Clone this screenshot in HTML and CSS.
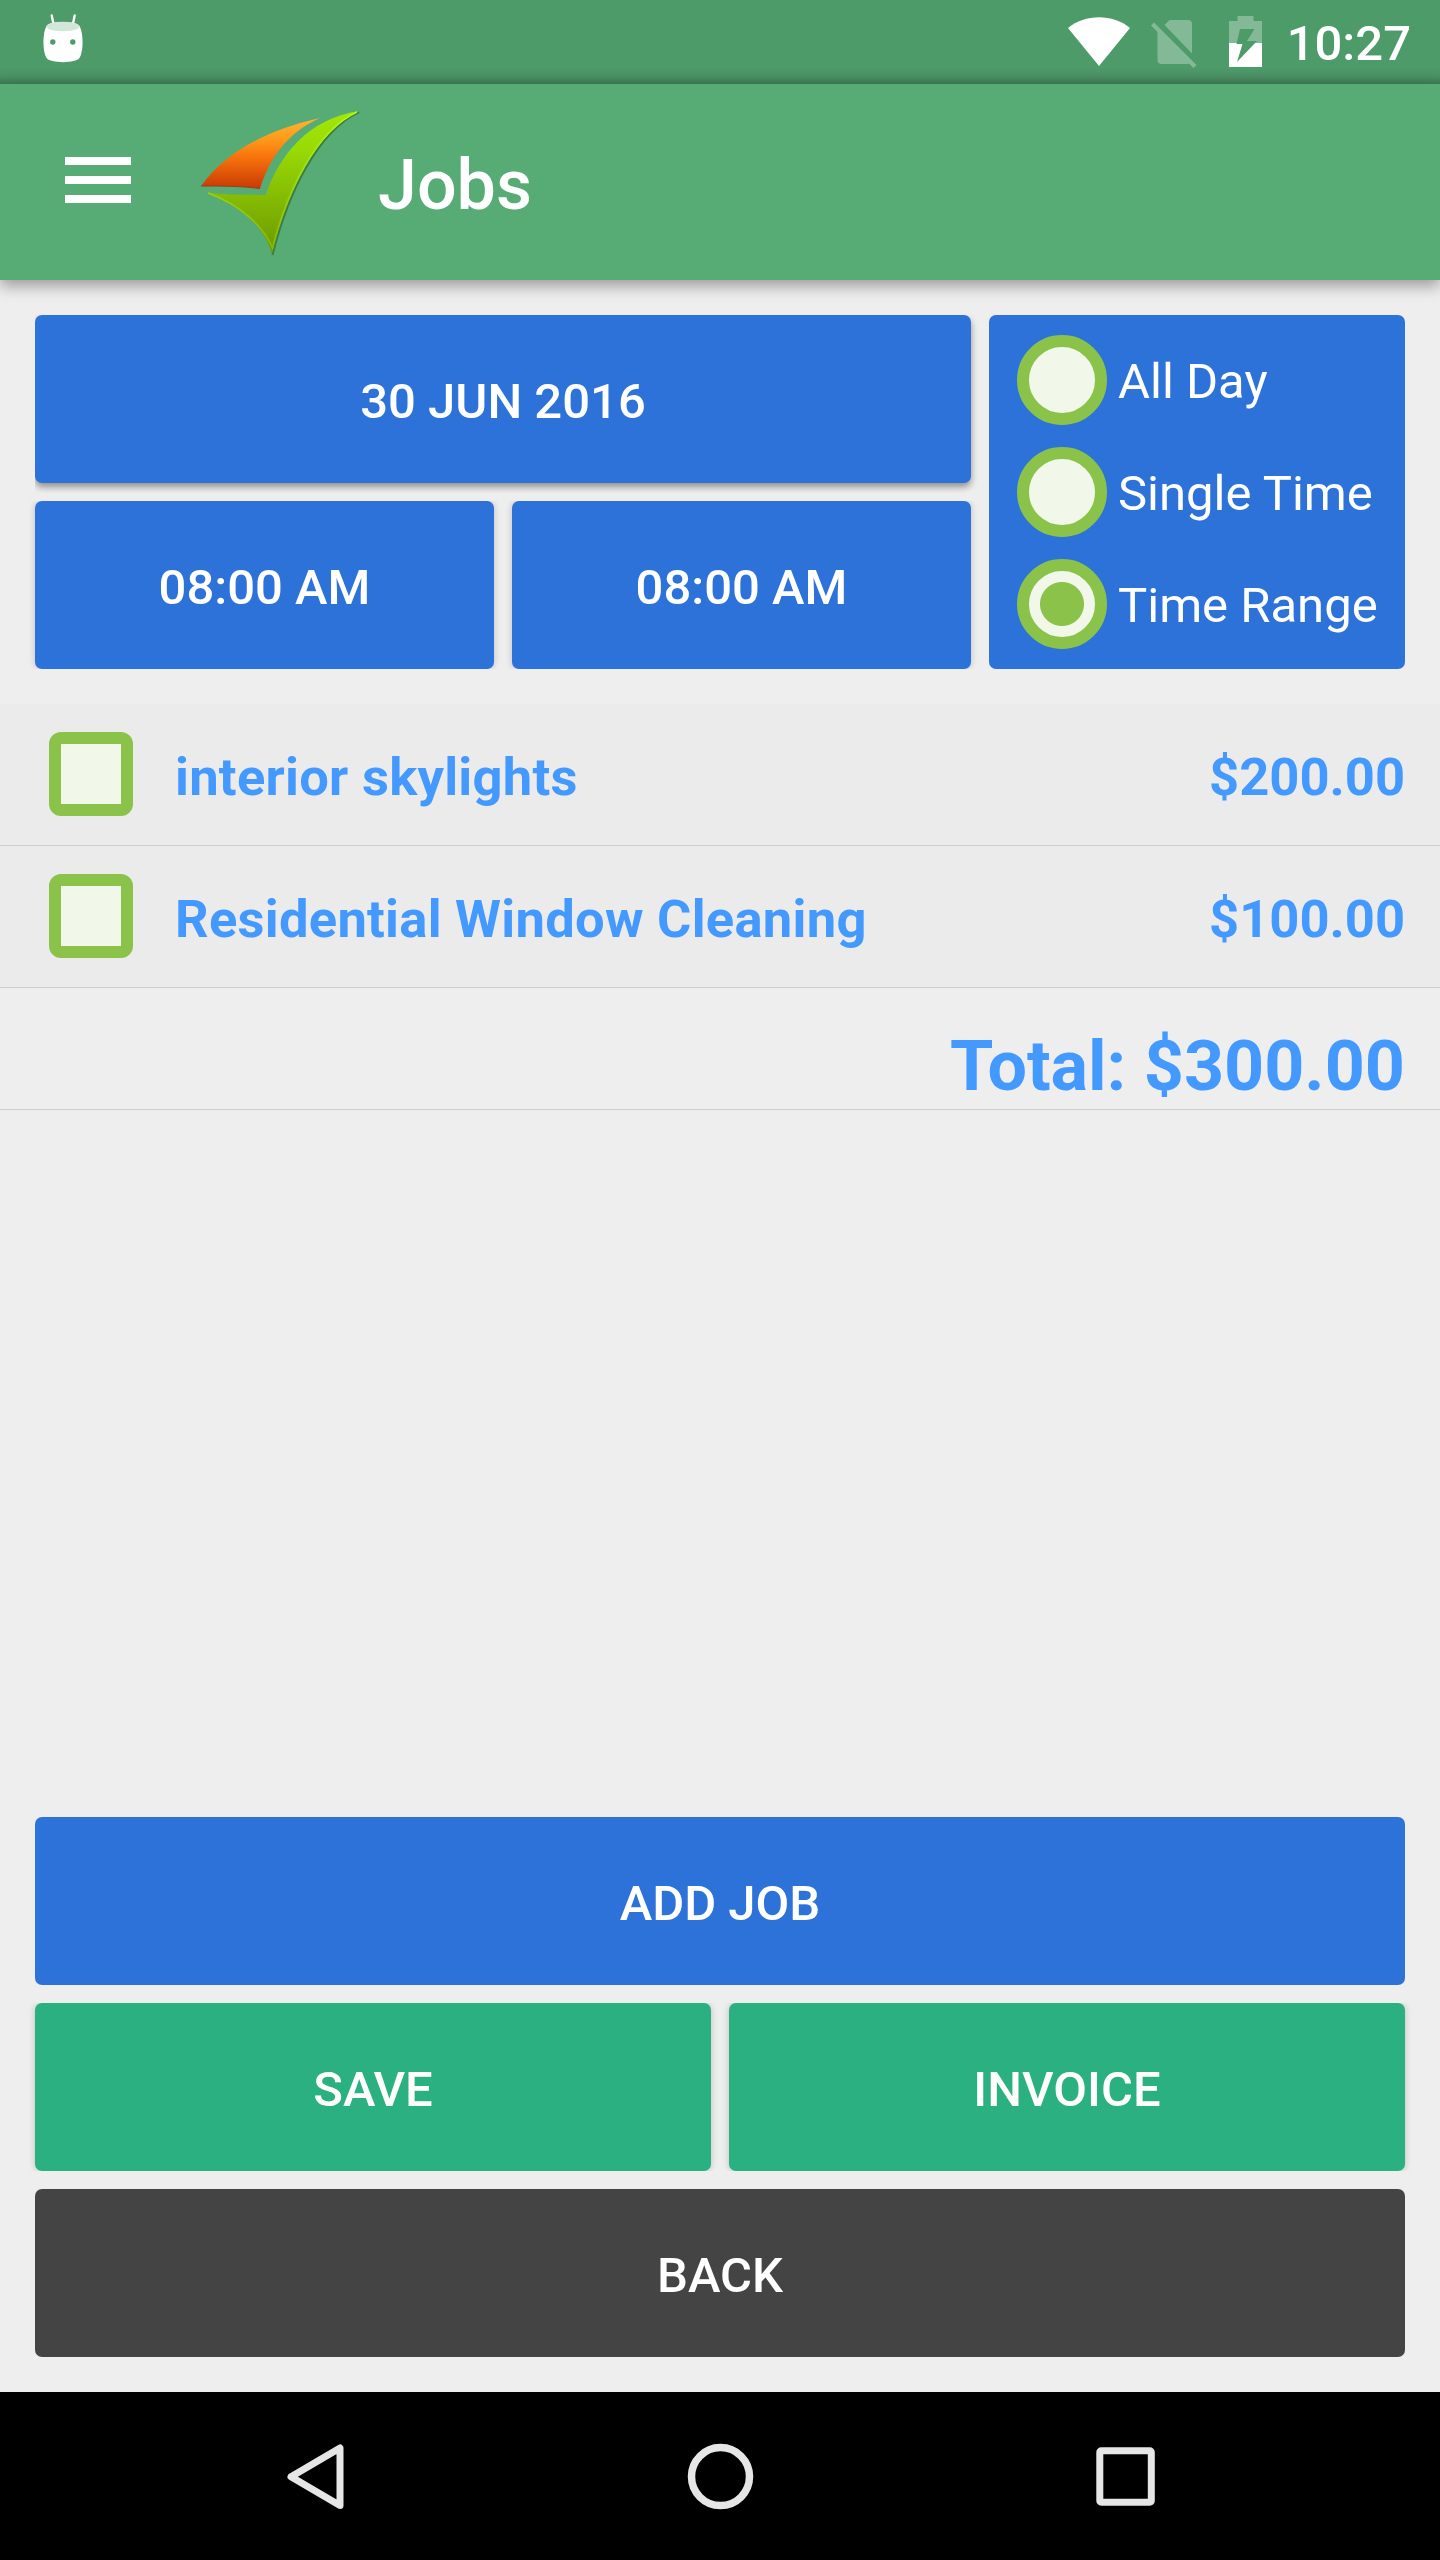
FILE: index.html
```html
<!DOCTYPE html>
<html lang="en">
<head>
    <meta charset="UTF-8">
    <meta name="viewport" content="width=device-width, initial-scale=1.0">
    <title>Jobs</title>
    <link rel="stylesheet" href="styles.css">
</head>
<body>
    <div class="status-bar">
        <svg class="icon-debug" width="42" height="56" viewBox="0 0 42 56">
            <path d="M9.700 2.500L11.700 12M32.700 2.500L30.700 12" stroke="#fff" stroke-width="2.400" stroke-linecap="round"/>
            <path d="M4.500 13C0.500 20 0.300 38 4.500 45C8 50.500 34 50.500 37.500 45C41.700 38 41.500 20 37.500 13C34 7.500 8 7.500 4.500 13Z" fill="#fff"/>
            <ellipse cx="21" cy="13.500" rx="16.500" ry="4.800" fill="#d2e6da"/>
            <circle cx="10.800" cy="29" r="2.700" fill="#4d9b69"/>
            <circle cx="30.800" cy="29" r="2.700" fill="#4d9b69"/>
        </svg>
        <div class="status-icons">
            <svg class="icon-wifi" width="62" height="50" viewBox="0 0 62 50">
                <path d="M0 11C17 -3.500 45 -3.500 62 11L31 49Z" fill="#fff"/>
            </svg>
            <svg class="icon-sim" width="46" height="50" viewBox="0 0 46 50">
                <path d="M13.500 7L18.500 2H37Q41 2 41 6V35.500ZM6.500 12.500L38.500 45Q38 46 36 46H10.500Q6.500 46 6.500 42Z" fill="#84b997"/>
                <path d="M1.500 6L44 48.500" stroke="#84b997" stroke-width="4.200"/>
            </svg>
            <svg class="icon-battery" width="33" height="51" viewBox="0 0 33 51">
                <path d="M0 5H8.500V0H24.500V5H33V28H0Z" fill="#84b997"/>
                <path d="M0 27H33V51H0Z" fill="#fff"/>
                <path d="M11 13H25.500L18 25H28L8 46L13.500 28H7.500Z" fill="#4d9b69"/>
            </svg>
            <span class="clock">10:27</span>
        </div>
    </div>

    <header class="toolbar">
        <div class="menu">
            <span></span>
            <span></span>
            <span></span>
        </div>
        <svg class="logo" width="164" height="150" viewBox="0 0 164 150">
            <defs>
                <linearGradient id="orange" x1="0" y1="0" x2="0" y2="1">
                    <stop offset="0" stop-color="#ffb52c"/>
                    <stop offset="0.300" stop-color="#ff9a1a"/>
                    <stop offset="0.550" stop-color="#f8730c"/>
                    <stop offset="1" stop-color="#c93a04"/>
                </linearGradient>
                <linearGradient id="green" x1="0" y1="0" x2="0" y2="1">
                    <stop offset="0" stop-color="#a2e606"/>
                    <stop offset="0.250" stop-color="#9adb06"/>
                    <stop offset="1" stop-color="#6d9800"/>
                </linearGradient>
                <linearGradient id="edge" x1="0" y1="0" x2="0" y2="1">
                    <stop offset="0" stop-color="#b4fa14"/>
                    <stop offset="1" stop-color="#86b808"/>
                </linearGradient>
            </defs>
            <path d="M160 5C119 24 89 86 73.500 148" fill="none" stroke="#2f6b2b" stroke-width="2" opacity="0.700"/>
            <path d="M2 79C28 44 68 23 121 11C90 25 72 48 61 81.500C42 79 20 79 2 79Z" fill="url(#orange)"/>
            <path d="M2 79C20 79 42 79 61 81.500" fill="none" stroke="#94421c" stroke-width="1"/>
            <path d="M160 4C109 12 81 47 66.500 88C46 87 26 89 7.500 85C42 97 66 121 73 147C88 85 118 23 160 4Z" fill="url(#green)"/>
            <path d="M158 5C117 24 88 84 73.500 141C65 120 42 98 9 86" fill="none" stroke="url(#edge)" stroke-width="1.600"/>
        </svg>
        <h1>Jobs</h1>
    </header>

    <main>
        <section class="schedule">
            <div class="times">
                <button class="btn blue date">30 JUN 2016</button>
                <div class="row">
                    <button class="btn blue">08:00 AM</button>
                    <button class="btn blue">08:00 AM</button>
                </div>
            </div>
            <div class="options">
                <label><span class="radio"></span>All Day</label>
                <label><span class="radio"></span>Single Time</label>
                <label><span class="radio checked"></span>Time Range</label>
            </div>
        </section>

        <section class="jobs">
            <div class="job">
                <span class="checkbox"></span>
                <span class="name">interior skylights</span>
                <span class="price">$200.00</span>
            </div>
            <div class="job">
                <span class="checkbox"></span>
                <span class="name">Residential Window Cleaning</span>
                <span class="price">$100.00</span>
            </div>
            <div class="total">Total: $300.00</div>
        </section>

        <section class="actions">
            <button class="btn blue">ADD JOB</button>
            <div class="row">
                <button class="btn green">SAVE</button>
                <button class="btn green">INVOICE</button>
            </div>
            <button class="btn dark">BACK</button>
        </section>
    </main>

    <nav class="nav-bar">
        <svg width="84" height="84" viewBox="0 0 84 84">
            <path d="M67 14V71.500L18 42.700Z" fill="none" stroke="#e6e6e6" stroke-width="7" stroke-linejoin="round"/>
        </svg>
        <svg width="84" height="84" viewBox="0 0 84 84">
            <circle cx="42.500" cy="42.600" r="29" fill="none" stroke="#e6e6e6" stroke-width="7.500"/>
        </svg>
        <svg width="84" height="84" viewBox="0 0 84 84">
            <rect x="16.800" y="16.800" width="51.500" height="51.500" rx="1.500" fill="none" stroke="#e6e6e6" stroke-width="7"/>
        </svg>
    </nav>
</body>
</html>
```
FILE: styles.css
```css
* {
    box-sizing: border-box;
}
body {
    margin: 0;
    width: 1440px;
    height: 2560px;
    display: flex;
    flex-direction: column;
    background-color: #eeeeee;
    font-family: Roboto, sans-serif;
    color: white;
}
svg {
    display: block;
    flex: none;
}
.status-bar {
    height: 84px;
    flex: none;
    display: flex;
    justify-content: space-between;
    padding: 0 29px 0 42px;
    background: linear-gradient(#4d9b69 0, #4d9b69 68px, #4a9064 76px, #417c52 84px);
}
.icon-debug {
    margin-top: 13px;
}
.status-icons {
    display: flex;
    align-items: flex-start;
}
.icon-wifi {
    margin-top: 17px;
}
.icon-sim {
    margin: 18px 0 0 21px;
}
.icon-battery {
    margin: 16px 0 0 32px;
}
.clock {
    margin: 15px 0 0 25px;
    font-size: 49px;
    font-weight: 500;
    line-height: 58px;
}
.toolbar {
    position: relative;
    height: 196px;
    flex: none;
    display: flex;
    align-items: center;
    padding-left: 65px;
    background-color: #57ab75;
    box-shadow: 0 6px 14px rgba(0, 0, 0, 0.35);
}
.menu {
    display: flex;
    flex-direction: column;
    gap: 11px;
    width: 66px;
    margin-bottom: 4px;
}
.menu span {
    height: 8px;
    background-color: white;
}
.logo {
    margin-left: 68px;
}
h1 {
    margin: 5px 0 0 15px;
    font-size: 70px;
    font-weight: 500;
    line-height: 82px;
}
main {
    flex: 1;
    display: flex;
    flex-direction: column;
}
.schedule {
    display: flex;
    gap: 18px;
    padding: 35px;
}
.times {
    width: 936px;
    display: flex;
    flex-direction: column;
    gap: 18px;
}
.row {
    display: flex;
    gap: 18px;
}
.btn {
    height: 168px;
    flex: 1 0 auto;
    padding: 5px 0 0;
    border: none;
    border-radius: 7px;
    color: white;
    font-family: inherit;
    font-size: 49px;
    font-weight: 500;
}
.row .btn {
    flex: 1 1 0;
    box-shadow: 0 0 7px rgba(0, 0, 0, 0.2);
    clip-path: inset(0 -9px);
}
.blue {
    background-color: #2d72d9;
}
.green {
    background-color: #2bb081;
}
.dark {
    background-color: #444444;
}
.date {
    box-shadow: 0 4px 7px rgba(0, 0, 0, 0.4);
    clip-path: inset(0 -9px -10px 0);
}
.options {
    width: 416px;
    display: flex;
    flex-direction: column;
    gap: 22px;
    padding: 20px 0 0 28px;
    border-radius: 7px;
    background-color: #2d72d9;
}
.options label {
    height: 90px;
    display: flex;
    align-items: center;
    gap: 11px;
    font-size: 49px;
    line-height: 94px;
    white-space: nowrap;
    padding-top: 4px;
}
.radio {
    width: 90px;
    height: 90px;
    flex: none;
    margin-top: -4px;
    border: 12.5px solid #8bc34a;
    border-radius: 50%;
    background-color: #f1f8e9;
}
.radio.checked {
    background-image: radial-gradient(circle, #8bc34a 21.5px, #f1f8e9 22.5px);
    background-origin: border-box;
}
.job {
    height: 142px;
    display: flex;
    align-items: center;
    padding: 0 35px 0 49px;
    background-color: #ebebeb;
    border-bottom: 1px solid #cecece;
    color: #4499ff;
    font-size: 52.5px;
    font-weight: 700;
    line-height: 62px;
}
.checkbox {
    width: 84px;
    height: 84px;
    flex: none;
    margin-bottom: 1px;
    border: 12px solid #8bc34a;
    border-radius: 12px;
    background-color: #f1f8e9;
}
.name {
    flex: 1;
    margin-left: 42px;
    letter-spacing: 0.27px;
}
.name, .price {
    padding-top: 4px;
}
.total {
    height: 122px;
    padding: 37px 35px 0 0;
    border-bottom: 1px solid #cecece;
    color: #4499ff;
    font-size: 70px;
    font-weight: 700;
    line-height: 82px;
    text-align: right;
}
.actions {
    display: flex;
    flex-direction: column;
    gap: 18px;
    margin-top: auto;
    padding: 0 35px 35px;
}
.nav-bar {
    height: 168px;
    flex: none;
    display: flex;
    align-items: center;
    justify-content: center;
    gap: 321px;
    background-color: black;
}
```
